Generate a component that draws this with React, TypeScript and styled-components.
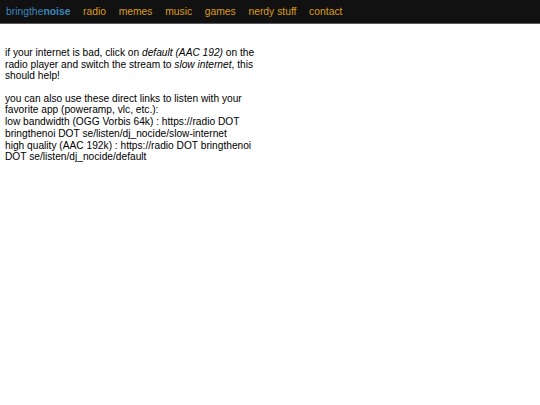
import React from "react";
import styled, { createGlobalStyle } from "styled-components";

const Global = createGlobalStyle`
  html, body { margin: 0; padding: 0; background: #fff; }
  body { font-family: "Liberation Sans", Arial, sans-serif; }
`;

const Nav = styled.nav`
  display: flex;
  align-items: center;
  gap: 12.6px;
  height: 23px;
  padding: 0 6px;
  background: #111;
  border-bottom: 1px solid #5a5a5a;
  font-size: 10.35px;
`;

const Brand = styled.a`
  color: #3a86bb;
  text-decoration: none;
  & b { font-weight: bold; }
`;

const NavLink = styled.a`
  color: #dc9c1e;
  text-decoration: none;
`;

const Main = styled.main`
  padding: 23px 5px 0;
  width: 256px;
  font-size: 10.2px;
  color: #000;
`;

const P = styled.p`
  margin: 0 0 10.6px;
  line-height: 11.7px;
`;

export default function App() {
  return (
    <>
      <Global />
      <Nav>
        <Brand href="#">bringthe<b>noise</b></Brand>
        {["radio", "memes", "music", "games", "nerdy stuff", "contact"].map((l) => (
          <NavLink key={l} href="#">{l}</NavLink>
        ))}
      </Nav>
      <Main>
        <P>
          if your internet is bad, click on <i>default (AAC 192)</i> on the radio player and switch the stream to <i>slow internet</i>, this should help!
        </P>
        <P>
          you can also use these direct links to listen with your favorite app (poweramp, vlc, etc.):
          <br />
          low bandwidth (OGG Vorbis 64k) : https://radio DOT bringthenoi DOT se/listen/dj_nocide/slow-internet
          <br />
          high quality (AAC 192k) : https://radio DOT bringthenoi DOT se/listen/dj_nocide/default
        </P>
      </Main>
    </>
  );
}
